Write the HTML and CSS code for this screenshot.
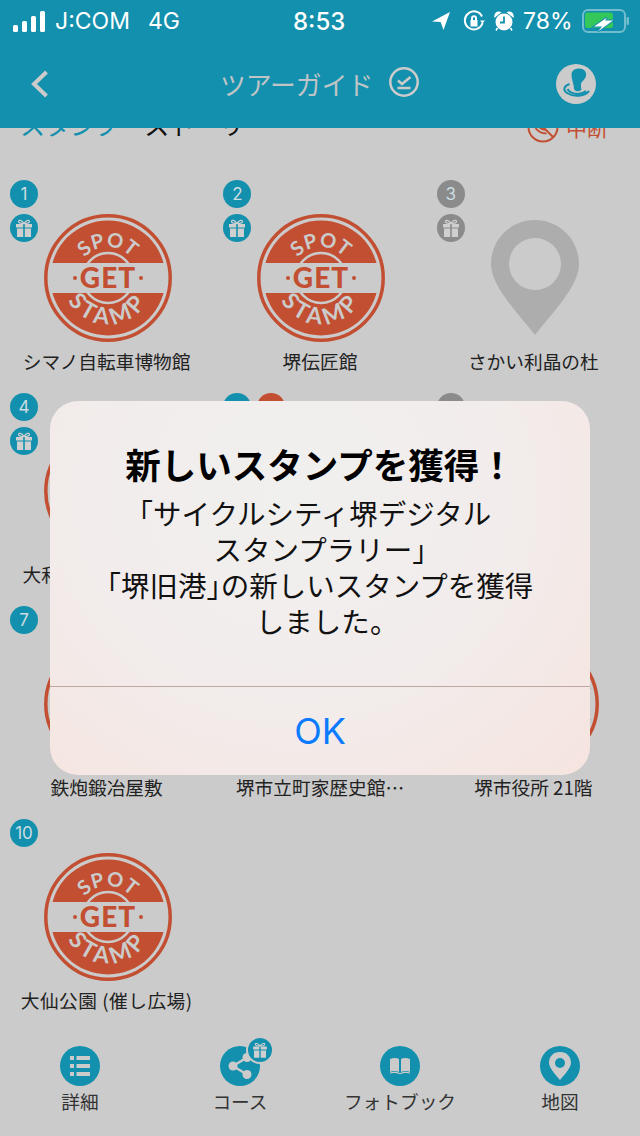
FILE: index.html
```html
<!DOCTYPE html>
<html lang="ja">
<head>
  <meta charset="UTF-8" />
  <title>ツアーガイド</title>
  <link rel="stylesheet" href="styles.css">
</head>
<body>

<svg class="defs" width="0" height="0">
  <symbol id="stamp" viewBox="0 0 128 128">
    <circle class="stamp-red" cx="64" cy="64" r="57.5" />
    <circle class="stamp-inner" cx="64" cy="64" r="25" />
    <rect class="stamp-band" x="0" y="49" width="128" height="30" />
    <circle class="stamp-ring" cx="64" cy="64" r="62.2" />
    <path id="arcTop" fill="none" d="M33 64a31 31 0 0 1 62 0" />
    <path id="arcBottom" fill="none" d="M18 64a46 46 0 0 0 92 0" />
    <text class="stamp-arc"><textPath href="#arcTop" startOffset="50%" text-anchor="middle">SPOT</textPath></text>
    <text class="stamp-arc stamp-arc-low"><textPath href="#arcBottom" startOffset="50%" text-anchor="middle">STAMP</textPath></text>
    <text class="stamp-get" x="64" y="74" text-anchor="middle">GET</text>
    <circle class="stamp-dot" cx="31" cy="64" r="2" />
    <circle class="stamp-dot" cx="97" cy="64" r="2" />
  </symbol>
  <symbol id="pin" viewBox="0 0 88 115">
    <path fill-rule="evenodd" d="M44 0C68 0 88 19 88 44C88 66 62 92 44 115C26 92 0 66 0 44C0 19 20 0 44 0ZM44 18A26 26 0 1 0 44 70A26 26 0 1 0 44 18Z" />
  </symbol>
  <symbol id="gift" viewBox="0 0 28 28">
    <path d="M6 10h7.200v3.400H6zM14.800 10H22v3.400h-7.200zM7 14.600h6.200V23H7zM14.800 14.600H21V23h-6.200z" />
    <path class="gift-bow" d="M14 9.400C12 6 8.500 5.500 8.500 7.400S12 9.400 14 9.400C16 9.400 19.500 9.300 19.500 7.400S16 6 14 9.400Z" />
  </symbol>
</svg>

<div class="phone">
  <header class="topbar">
    <div class="status">
      <svg class="signal" width="32" height="21" viewBox="0 0 32 21">
        <rect x="0" y="14" width="5" height="7" rx="1.500" />
        <rect x="9" y="10" width="5" height="11" rx="1.500" />
        <rect x="18" y="5" width="5" height="16" rx="1.500" />
        <rect x="27" y="0" width="5" height="21" rx="1.500" />
      </svg>
      <span class="carrier">J:COM</span>
      <span class="network">4G</span>
      <span class="clock">8:53</span>
      <svg class="st-icon st-location" width="19" height="18" viewBox="0 0 19 18">
        <path d="M18 0L0 9.500l8.600.6L11.500 18z" />
      </svg>
      <svg class="st-icon st-rotate" width="22" height="22" viewBox="0 0 22 22">
        <path class="st-rotate-arc" d="M19.500 13A9 9 0 1 1 19 6.500" />
        <path d="M17 10.500h5l-2.500 3zM7.500 10h7v6.500h-7z" />
        <path class="st-rotate-lock" d="M9 10V8.200a2 2 0 0 1 4 0V10" />
      </svg>
      <svg class="st-icon st-alarm" width="20" height="20" viewBox="0 0 20 20">
        <circle cx="10" cy="11" r="8.500" />
        <path class="st-alarm-ears" d="M1 5.500C1 2 3.500 .5 6 1.500zM19 5.500C19 2 16.500 .5 14 1.500zM3.500 17l-1.500 2.500M16.500 17l1.500 2.500" />
        <path class="st-alarm-hands" d="M10 5.500V11.500H6" />
      </svg>
      <span class="percent">78%</span>
      <svg class="st-battery" width="48" height="25" viewBox="0 0 48 25">
        <rect class="bat-shell" x="1" y="1" width="42" height="22" rx="5" />
        <rect class="bat-nub" x="44.500" y="8" width="2.500" height="8" rx="1" />
        <rect class="bat-level" x="3" y="3.500" width="28" height="15.500" rx="2.500" />
        <path class="bat-bolt" d="M25 8.500L12 17.500h8L16 22.500 31 11.500h-8L25 8.500z" />
      </svg>
    </div>
    <div class="navbar">
      <svg class="back" width="18" height="28" viewBox="0 0 18 28">
        <path d="M15.500 2L3 14l12.500 12" />
      </svg>
      <div class="nav-title">
        <span>ツアーガイド</span>
        <svg class="title-check" width="30" height="30" viewBox="0 0 30 30">
          <circle cx="15" cy="15" r="13.700" />
          <path d="M9 13.500l4 3.500 8.500-7M8.500 21h13" />
        </svg>
      </div>
      <svg class="nav-stamp" width="40" height="40" viewBox="0 0 40 40">
        <circle class="nav-stamp-bg" cx="20" cy="20" r="20" />
        <path class="nav-stamp-mark" d="M18 25C18 20 15.500 16 15.500 11C15.500 6.500 19 4.500 23 4.500C28 4.500 31 8 30 12C29 16 25.500 17 25 20C24.800 22 25 24 25.500 25.500C24 28 19 28 18 25Z" />
        <path class="nav-stamp-line" d="M13.500 20C8 22 6.500 26 11 29C17 33 28 33 33 27" />
        <path class="nav-stamp-line" d="M11.500 25C14 30 24 32 30 27" />
      </svg>
    </div>
  </header>

  <main class="content">
    <div class="tabs">
      <span class="tab tab-active">スタンプ</span>
      <span class="tab">ストーリー</span>
      <span class="pause">
        <svg width="32" height="32" viewBox="0 0 32 32">
          <circle cx="16" cy="16" r="14.500" />
          <path d="M6 6l20 20M8.500 17c3 4 7 5.500 11 5.500M11 14.500c2 3 5 4.500 8 4.500" />
        </svg>
        中断
      </span>
    </div>

    <div class="spots">
      <div class="spot">
        <span class="num">1</span>
        <span class="num num-gift"><svg width="28" height="28"><use href="#gift" /></svg></span>
        <svg class="mark"><use href="#stamp" /></svg>
        <p class="spot-name">シマノ自転車博物館</p>
      </div>
      <div class="spot">
        <span class="num">2</span>
        <span class="num num-gift"><svg width="28" height="28"><use href="#gift" /></svg></span>
        <svg class="mark"><use href="#stamp" /></svg>
        <p class="spot-name">堺伝匠館</p>
      </div>
      <div class="spot">
        <span class="num num-off">3</span>
        <span class="num num-gift num-off"><svg width="28" height="28"><use href="#gift" /></svg></span>
        <svg class="mark mark-pin"><use href="#pin" x="20" y="6" width="88" height="115" /></svg>
        <p class="spot-name">さかい利晶の杜</p>
      </div>

      <div class="spot">
        <span class="num">4</span>
        <span class="num num-gift"><svg width="28" height="28"><use href="#gift" /></svg></span>
        <svg class="mark"><use href="#stamp" /></svg>
        <p class="spot-name">大和川の自然と歴史</p>
      </div>
      <div class="spot">
        <span class="num"></span>
        <span class="num num-new"></span>
      </div>
      <div class="spot">
        <span class="num num-off"></span>
      </div>

      <div class="spot">
        <span class="num">7</span>
        <svg class="mark"><use href="#stamp" /></svg>
        <p class="spot-name">鉄炮鍛冶屋敷</p>
      </div>
      <div class="spot">
        <span class="num">8</span>
        <p class="spot-name spot-name-low">堺市立町家歴史館…</p>
      </div>
      <div class="spot">
        <span class="num">9</span>
        <svg class="mark"><use href="#stamp" /></svg>
        <p class="spot-name">堺市役所 21階</p>
      </div>

      <div class="spot">
        <span class="num">10</span>
        <svg class="mark"><use href="#stamp" /></svg>
        <p class="spot-name spot-name-wide">大仙公園 (催し広場)</p>
      </div>
    </div>
  </main>

  <nav class="tabbar">
    <div class="tabbar-item">
      <svg class="tabbar-icon" width="40" height="40" viewBox="0 0 40 40">
        <circle class="tb-bg" cx="20" cy="20" r="20" />
        <path class="tb-fg" d="M10 10h4v4h-4zM16.500 10H30v4H16.500zM10 18h4v4h-4zM16.500 18H30v4H16.500zM10 26h4v4h-4zM16.500 26H30v4H16.500z" />
      </svg>
      <span>詳細</span>
    </div>
    <div class="tabbar-item">
      <svg class="tabbar-icon" width="40" height="40" viewBox="0 0 40 40">
        <circle class="tb-bg" cx="20" cy="20" r="20" />
        <path class="tb-line" d="M27 11.500L13 20l14 8.500" />
        <circle class="tb-fg" cx="27" cy="11.500" r="4.500" />
        <circle class="tb-fg" cx="13" cy="20" r="4.500" />
        <circle class="tb-fg" cx="27" cy="28.500" r="4.500" />
      </svg>
      <span class="num num-gift num-course"><svg width="24" height="24"><use href="#gift" /></svg></span>
      <span>コース</span>
    </div>
    <div class="tabbar-item">
      <svg class="tabbar-icon" width="40" height="40" viewBox="0 0 40 40">
        <circle class="tb-bg" cx="20" cy="20" r="20" />
        <path class="tb-fg" d="M10 13c3-1.500 7-1.500 9 0v13c-2.500-1.300-6.500-1.300-9 0zM21 13c2-1.500 6-1.500 9 0v13c-2.500-1.300-6.500-1.300-9 0z" />
        <path class="tb-fg" d="M10 26.500c3-1 7-1 10 .8c3-1.800 7-1.800 10-.8v1c-3-1-7-.6-10 .8c-3-1.400-7-1.800-10-.8z" />
      </svg>
      <span>フォトブック</span>
    </div>
    <div class="tabbar-item">
      <svg class="tabbar-icon" width="40" height="40" viewBox="0 0 40 40">
        <circle class="tb-bg" cx="20" cy="20" r="20" />
        <path class="tb-fg" fill-rule="evenodd" d="M20 6C27 6 31 11 31 16.500C31 22 25 28 20 34C15 28 9 22 9 16.500C9 11 13 6 20 6ZM20 12A5 5 0 1 0 20 22A5 5 0 1 0 20 12Z" />
      </svg>
      <span>地図</span>
    </div>
  </nav>

  <div class="overlay">
    <div class="dialog">
      <div class="dialog-body">
        <h2 class="dialog-title">新しいスタンプを獲得！</h2>
        <p class="dialog-text"><span class="first-line"><span class="half">「</span>サイクルシティ堺デジタル</span><br>スタンプラリー<span class="half">」</span><br><span class="half">「</span>堺旧港<span class="half">」</span>の新しいスタンプを獲得<br>しました<span class="half">。</span></p>
      </div>
      <div class="dialog-ok">OK</div>
    </div>
  </div>
</div>

</body>
</html>
```
FILE: styles.css
```css
* {
  box-sizing: border-box;
}
html, body {
  margin: 0;
  height: 100%;
  overflow: hidden;
}
body {
  font-family: "Noto Sans CJK JP", "Noto Sans", sans-serif;
  background: #cbcbcb;
  color: #222;
}
.defs {
  position: absolute;
}
.phone {
  position: relative;
  display: flex;
  flex-direction: column;
  width: 640px;
  height: 1136px;
  overflow: hidden;
}

/* Status bar and nav */
.topbar {
  flex: none;
  height: 128px;
  background: #1390ad;
}
.status {
  display: flex;
  align-items: center;
  height: 42px;
  padding-left: 13px;
  color: #fff;
  font-family: Inter, "Liberation Sans", sans-serif;
  font-size: 23px;
}
.signal {
  fill: #fff;
  margin-right: 10px;
}
.carrier {
  width: 93px;
}
.network {
  width: 145px;
}
.clock {
  width: 139px;
  font-weight: 500;
  font-size: 24px;
}
.st-icon {
  flex: none;
  fill: #fff;
}
.st-location {
  margin-right: 12px;
}
.st-rotate {
  margin-right: 9px;
}
.st-rotate-arc,
.st-rotate-lock {
  fill: none;
  stroke: #fff;
  stroke-width: 2;
}
.st-alarm {
  margin-right: 9px;
}
.st-alarm-ears {
  stroke: #fff;
  stroke-width: 1.5;
}
.st-alarm-hands {
  fill: none;
  stroke: #1390ad;
  stroke-width: 1.8;
}
.percent {
  width: 59px;
}
.bat-shell {
  fill: none;
  stroke: #fff;
  stroke-opacity: .4;
  stroke-width: 2;
}
.bat-nub {
  fill: #fff;
  fill-opacity: .4;
}
.bat-level {
  fill: #34c759;
}
.bat-bolt {
  fill: #fff;
  stroke: #1390ad;
  stroke-width: 2;
  paint-order: stroke;
}
.navbar {
  position: relative;
  display: flex;
  align-items: center;
  justify-content: space-between;
  height: 86px;
  padding: 0 44px 2px 31px;
}
.back {
  fill: none;
  stroke: #cbcbcb;
  stroke-width: 4;
}
.nav-title {
  position: absolute;
  left: 220px;
  top: 22px;
  display: flex;
  align-items: center;
  gap: 16px;
  color: #bfc4c6;
  font-size: 25.8px;
  line-height: 40px;
}
.title-check {
  margin-top: -5px;
  fill: none;
  stroke: #cbcbcb;
  stroke-width: 2.5;
}
.nav-stamp-bg {
  fill: #cbcbcb;
}
.nav-stamp-mark {
  fill: #1390ad;
}
.nav-stamp-line {
  fill: none;
  stroke: #1390ad;
  stroke-width: 2;
}

/* Tabs, scrolled most of the way under the header */
.content {
  flex: 1;
  overflow: hidden;
}
.tabs {
  display: flex;
  align-items: flex-start;
  height: 74px;
  margin-top: -22px;
  padding: 0 32px 0 20px;
  font-size: 25px;
  line-height: 36px;
}
.tab {
  margin-right: 25px;
  color: #111;
}
.tab-active {
  color: #1390ad;
}
.pause {
  display: flex;
  align-items: center;
  gap: 7px;
  margin: 3px 0 0 auto;
  color: #c34f32;
  font-size: 21px;
}
.pause svg {
  fill: none;
  stroke: #c34f32;
  stroke-width: 2;
}

/* Spot grid */
.spots {
  display: grid;
  grid-template-columns: repeat(3, 1fr);
  grid-auto-rows: 213px;
}
.spot {
  position: relative;
  padding-top: 34px;
  text-align: center;
}
.num {
  position: absolute;
  left: 10px;
  top: 0;
  width: 28px;
  height: 28px;
  border-radius: 50%;
  background: #1390ad;
  color: #cbdde2;
  font-family: Inter, "Liberation Sans", sans-serif;
  font-size: 17px;
  line-height: 28px;
}
.num-gift {
  top: 34px;
  fill: #cfcfcf;
}
.num-gift svg {
  display: block;
}
.gift-bow {
  fill: none;
  stroke: #cfcfcf;
  stroke-width: 1.2;
}
.num-off {
  background: #8b8b8b;
}
.num-new {
  left: 44px;
  background: #c34f32;
}
.mark {
  display: block;
  width: 128px;
  height: 128px;
  margin: 0 auto;
  position: relative;
  left: 1.5px;
}
.mark-pin {
  fill: #adadad;
}
.spot-name {
  margin: 5px 0 0;
  color: #222;
  font-size: 18.7px;
  line-height: 28px;
  white-space: nowrap;
}
.spot-name-low {
  margin-top: 133px;
}
.spot-name-wide {
  letter-spacing: .5px;
}

/* The stamp drawing */
.stamp-ring {
  fill: none;
  stroke: #c34f32;
  stroke-width: 3.5;
}
.stamp-red {
  fill: #c34f32;
}
.stamp-inner {
  fill: none;
  stroke: #cbcbcb;
  stroke-width: 2.5;
}
.stamp-band {
  fill: #cbcbcb;
}
.stamp-arc {
  fill: #cbcbcb;
  font-family: Lato, "Open Sans", sans-serif;
  font-size: 20px;
  font-weight: 700;
  letter-spacing: .5px;
}
.stamp-arc-low {
  font-size: 23px;
  letter-spacing: 4px;
}
.stamp-get {
  fill: #c34f32;
  font-family: Lato, "Open Sans", sans-serif;
  font-size: 28px;
  font-weight: 900;
  letter-spacing: 1px;
}
.stamp-dot {
  fill: #c34f32;
}

/* Bottom tabs */
.tabbar {
  flex: none;
  display: grid;
  grid-template-columns: repeat(4, 1fr);
  height: 100px;
  padding-top: 10px;
}
.tabbar-item {
  position: relative;
  display: flex;
  flex-direction: column;
  align-items: center;
  color: #333;
  font-size: 18.7px;
  line-height: 28px;
}
.tabbar-icon {
  margin-bottom: 1px;
}
.tb-bg {
  fill: #1390ad;
}
.tb-fg {
  fill: #cbcbcb;
}
.tb-line {
  fill: none;
  stroke: #cbcbcb;
  stroke-width: 2.5;
}
.num-course {
  left: 86px;
  top: -10px;
  border: 2px solid #cbcbcb;
}

/* Alert */
.overlay {
  position: absolute;
  left: 50px;
  top: 401px;
}
.dialog {
  display: flex;
  flex-direction: column;
  width: 540px;
  height: 374px;
  border-radius: 28px;
  background: radial-gradient(ellipse at 45% 25%, #f0f0ef 0%, #f2eceb 55%, #f6e4df 100%);
  text-align: center;
}
.dialog-body {
  flex: none;
  height: 286px;
  padding-top: 40px;
  border-bottom: 1px solid #c0a7a2;
}
.dialog-title {
  margin: 0 0 8px;
  color: #000;
  font-size: 35.5px;
  font-weight: 700;
  line-height: 46px;
}
.dialog-text {
  margin: 0;
  color: #111;
  font-size: 28.5px;
  line-height: 36px;
}
/* brackets set half width, as the reference does */
.half {
  font-feature-settings: "halt";
}
.first-line {
  margin-left: -10px;
}
.dialog-ok {
  flex: 1;
  color: #0a7aff;
  font-family: Inter, "Liberation Sans", sans-serif;
  font-size: 36px;
  line-height: 88px;
}
```
